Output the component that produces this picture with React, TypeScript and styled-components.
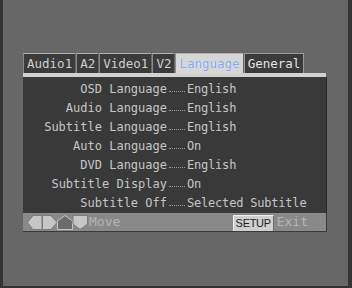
import styled, { createGlobalStyle } from 'styled-components'

const GlobalStyle = createGlobalStyle`
  html, body { margin: 0; padding: 0; background: #676767; }
  body { font-family: "DejaVu Sans Mono", "Liberation Mono", monospace; }
`

interface Setting {
  label: string;
  value: string;
}

const settings: Setting[] = [
  { label: 'OSD Language', value: 'English' },
  { label: 'Audio Language', value: 'English' },
  { label: 'Subtitle Language', value: 'English' },
  { label: 'Auto Language', value: 'On' },
  { label: 'DVD Language', value: 'English' },
  { label: 'Subtitle Display', value: 'On' },
  { label: 'Subtitle Off', value: 'Selected Subtitle' },
]

const tabs = ['Audio1', 'A2', 'Video1', 'V2', 'Language', 'General']

const Screen = styled.div`
  width: 352px;
  height: 288px;
  box-sizing: border-box;
  background: #676767;
  border-left: 3px solid #343434;
  border-right: 4px solid #343434;
  border-bottom: 2px solid #343434;
  position: relative;
  overflow: hidden;
`

const BottomMark = styled.div`
  position: absolute;
  left: 142px;
  bottom: -2px;
  width: 17px;
  height: 2px;
  background: #141414;
`

const Menu = styled.div`
  margin: 53px 0 0 20px;
  width: 304px;
  font-size: 12px;
`

const TabBar = styled.div`
  display: flex;
  gap: 1px;
  height: 20px;
`

const Tab = styled.div<{ $state: 'normal' | 'active' | 'focus' }>`
  box-sizing: border-box;
  height: 20px;
  padding: 0 3px;
  font-size: 12.5px;
  line-height: 19px;
  border-top: 1px solid #b0b0b0;
  border-left: 1px solid #8a8a8a;
  background: ${p => (p.$state === 'active' ? '#d6d6d6' : '#3b3b3b')};
  color: ${p => (p.$state === 'active' ? '#7ea8ec' : '#cfcfcf')};
  ${p => p.$state === 'active' && 'text-shadow: 0 0 1px #ffffff;'}
  ${p => p.$state === 'focus' && 'border: 1px solid #9a9a9a; border-bottom: none; color: #e4e4e4;'}
`

const Strip = styled.div`
  width: 303px;
  height: 4px;
  background: #d2d2d2;
`

const Panel = styled.div`
  background: #393939;
  padding: 3px 0 0;
  border-right: 1px solid #2a2a2a;
`

const Row = styled.div`
  display: grid;
  grid-template-columns: 144px 16px 1fr;
  column-gap: 2px;
  height: 19px;
  line-height: 19px;
  color: #c6c6c6;
`

const Label = styled.span`
  text-align: right;
`

const Dots = styled.span`
  align-self: center;
  margin-top: 3px;
  border-bottom: 1px dotted #9a9a9a;
`

const Value = styled.span`
  letter-spacing: -0.2px;
`

const Footer = styled.div`
  display: flex;
  align-items: center;
  height: 18px;
  padding: 0 0 0 4px;
  background: #898989;
  border-bottom: 1px solid #3a3a3a;
  border-right: 1px solid #3a3a3a;
`

const Keys = styled.div`
  display: flex;
  align-items: center;
  height: 15px;
`

const Hint = styled.span`
  color: #b4b4b4;
  font-size: 13px;
  line-height: 18px;
  margin-left: 1px;
`

const Spacer = styled.div`
  flex: 1;
`

const SetupKey = styled.span`
  box-sizing: border-box;
  height: 16px;
  width: 41px;
  margin-top: 1px;
  background: #d0d0d0;
  border-top: 1px solid #eeeeee;
  border-left: 1px solid #eeeeee;
  border-right: 1px solid #6a6a6a;
  color: #1e1e1e;
  font-family: "Liberation Sans", Arial, sans-serif;
  font-size: 11px;
  letter-spacing: -0.3px;
  line-height: 15px;
  text-align: center;
`

const ExitHint = styled(Hint)`
  margin: 0 18px 0 3px;
`

const ArrowKeys = () => (
  <svg width="61" height="15" viewBox="0 0 61 15">
    <g stroke="#7a7a7a" strokeWidth="1">
      <polygon points="0.5,7.5 6,0.5 15,0.5 15,14.5 6,14.5" fill="#c6c6c6" />
      <polygon points="15.5,0.5 24,0.5 30,7.5 24,14.5 15.5,14.5" fill="#c6c6c6" />
      <polygon points="30.5,14.5 30.5,6 38,0.5 45.5,6 45.5,14.5" fill="#6c6c6c" stroke="#c6c6c6" />
      <polygon points="46,0.5 60.5,0.5 60.5,9 53,14.5 46,9" fill="#c6c6c6" />
    </g>
  </svg>
)

const App = () => {
  return (
    <Screen>
      <GlobalStyle />
      <Menu>
        <TabBar>
          {tabs.map(t => (
            <Tab key={t} $state={t === 'Language' ? 'active' : t === 'General' ? 'focus' : 'normal'}>
              {t}
            </Tab>
          ))}
        </TabBar>
        <Strip />
        <Panel>
          {settings.map(s => (
            <Row key={s.label}>
              <Label>{s.label}</Label>
              <Dots />
              <Value>{s.value}</Value>
            </Row>
          ))}
        </Panel>
        <Footer>
          <Keys>
            <ArrowKeys />
          </Keys>
          <Hint>Move</Hint>
          <Spacer />
          <SetupKey>SETUP</SetupKey>
          <ExitHint>Exit</ExitHint>
        </Footer>
      </Menu>
      <BottomMark />
    </Screen>
  )
}

export default App
